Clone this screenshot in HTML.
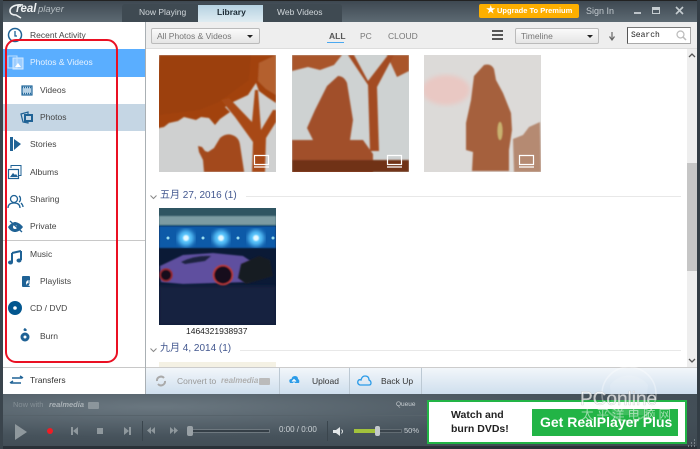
<!DOCTYPE html>
<html><head><meta charset="utf-8"><style>
html,body{margin:0;padding:0;width:700px;height:449px;overflow:hidden;background:#333;}
*{box-sizing:border-box}
body{font-family:"Liberation Sans","Noto Sans CJK SC",sans-serif;position:relative}
#w{position:absolute;left:0;top:0;width:700px;height:449px;overflow:hidden;filter:blur(.35px)}
.a{position:absolute}
.t{position:absolute;white-space:nowrap;line-height:1;color:#444;font-size:8.5px}
svg{position:absolute;overflow:visible}
</style></head><body><div id="w">
<div class="a" style="left:0;top:0;width:700px;height:22px;background:linear-gradient(#3d4750,#5d6a73)"></div>
<div class="a" style="left:0;top:0;width:700px;height:1px;background:#222"></div>
<div class="a" style="left:0;top:0;width:3px;height:449px;background:#3a444c"></div>
<div class="a" style="left:697px;top:0;width:3px;height:449px;background:#333d45"></div>
<!-- logo -->
<div class="t" style="left:16px;top:4px;font-size:11.5px;font-weight:bold;font-style:italic;color:#eef1f2">real</div>
<div class="t" style="left:38px;top:5px;font-size:9.5px;font-style:italic;color:#b5bdc2">player</div>
<svg style="left:9px;top:3px" width="20" height="16"><path d="M14 2C6 1 1 4 1 8c0 3 3 4 6 4l5 3" fill="none" stroke="#eef1f2" stroke-width="1.600"/></svg>
<!-- tabs -->
<div class="a" style="left:122px;top:4px;width:220px;height:18px;background:#3f4a52;border-radius:3px 3px 0 0"></div>
<div class="a" style="left:198px;top:5px;width:65px;height:17px;background:linear-gradient(#b5d2e2,#dfecf2)"></div>
<div class="t" style="left:139px;top:8px;color:#d0d6da">Now Playing</div>
<div class="t" style="left:217px;top:8px;color:#1c2a34;font-weight:bold">Library</div>
<div class="t" style="left:277px;top:8px;color:#d0d6da">Web Videos</div>
<!-- upgrade -->
<div class="a" style="left:479px;top:4px;width:100px;height:14px;background:#fdaf00;border-radius:2px"></div>
<div class="t" style="left:486px;top:6px;color:#fff;font-size:9.5px">★</div>
<div class="t" style="left:497px;top:7px;color:#fff;font-size:7.500px;font-weight:bold">Upgrade To Premium</div>
<div class="t" style="left:586px;top:7px;color:#c3cacf;font-size:9px">Sign In</div>
<div class="a" style="left:634px;top:12px;width:7px;height:2px;background:#bcc3c8"></div>
<div class="a" style="left:652px;top:7px;width:8px;height:7px;border:1px solid #c5ccd0;border-top-width:3px"></div>
<svg style="left:675px;top:6px" width="10" height="10"><path d="M1 1L8 8M8 1L1 8" stroke="#c5ccd0" stroke-width="1.600"/></svg>
<!-- sidebar -->
<div class="a" style="left:3px;top:22px;width:143px;height:372px;background:#fff;border-right:1px solid #aab0b4"></div>
<div class="a" style="left:3px;top:49px;width:142px;height:28px;background:#5aaeff"></div>
<div class="a" style="left:3px;top:104px;width:142px;height:27px;background:#c5d6e4"></div>
<div class="a" style="left:3px;top:240px;width:142px;height:1px;background:#c8c8c8"></div>
<div class="a" style="left:3px;top:367px;width:142px;height:1px;background:#c8c8c8"></div>
<div class="t" style="left:30px;top:31px">Recent Activity</div>
<div class="t" style="left:30px;top:58px;color:#e6f2ff">Photos &amp; Videos</div>
<div class="t" style="left:40px;top:86px">Videos</div>
<div class="t" style="left:40px;top:113px">Photos</div>
<div class="t" style="left:30px;top:140px">Stories</div>
<div class="t" style="left:30px;top:168px">Albums</div>
<div class="t" style="left:30px;top:195px">Sharing</div>
<div class="t" style="left:30px;top:222px">Private</div>
<div class="t" style="left:30px;top:250px">Music</div>
<div class="t" style="left:40px;top:277px">Playlists</div>
<div class="t" style="left:30px;top:304px">CD / DVD</div>
<div class="t" style="left:40px;top:332px">Burn</div>
<div class="t" style="left:30px;top:376px;color:#333">Transfers</div>
<!-- sidebar icons -->
<svg style="left:0;top:0" width="150" height="394">
<circle cx="15" cy="35" r="6.500" fill="none" stroke="#1f6295" stroke-width="1.500"/><path d="M15 31v5h2" fill="none" stroke="#1f6295" stroke-width="1.300"/>
<rect x="13" y="58" width="10" height="11" fill="#9ccdff" stroke="#d5eaff"/><rect x="8" y="56" width="9" height="12" fill="none" stroke="#bfe0ff"/><path d="M15 67l3-4 3 4z" fill="#fff"/>
<rect x="22" y="86" width="10" height="9" fill="#b9d3e6" stroke="#23689b" stroke-width="1.200"/><path d="M22 87.500h10M22 93.500h10" stroke="#23689b" stroke-width="1.500" stroke-dasharray="1 1"/>
<rect x="24" y="114" width="9" height="8" fill="#1f6295"/><path d="M21 114l7-2v11l-5-1z" fill="none" stroke="#1f6295" stroke-width="1.200"/><rect x="26" y="116" width="5" height="4" fill="#c5d6e4"/>
<path d="M10 137h3v14h-3zM14 139l7 5-7 6z" fill="#1f6295"/>
<rect x="8.500" y="169.500" width="10" height="9" fill="#fff" stroke="#1f6295" stroke-width="1.200"/><path d="M11 168v-2.500h10v10h-2" fill="none" stroke="#1f6295"/><path d="M10 177l3-4 2 2 1-1 2 3z" fill="#1f6295"/>
<circle cx="14" cy="199" r="3.500" fill="none" stroke="#1f6295" stroke-width="1.300"/><path d="M8 208c0-4 3-5 6-5s6 1 6 5M19 196c2 1 2 5 0 6M21 203c1 1 2 2 2 4" fill="none" stroke="#1f6295" stroke-width="1.300"/>
<path d="M8 227c3-4 6-5 7-5s5 1 8 5c-3 4-6 5-8 5s-5-1-7-5z" fill="#1f6295"/><circle cx="15" cy="227" r="2" fill="#fff"/><path d="M10 221l12 11" stroke="#1f6295" stroke-width="1.300"/>
<path d="M12 253v9M21 251v9M12 253l9-2" fill="none" stroke="#1f6295" stroke-width="2"/><ellipse cx="10.500" cy="262.500" rx="2.500" ry="2" fill="#1f6295"/><ellipse cx="19" cy="260.500" rx="2.500" ry="2" fill="#1f6295"/>
<rect x="22" y="276" width="8" height="11" rx="1" fill="#1f6295"/><circle cx="29" cy="283" r="3" fill="#fff"/><path d="M29 279v5" stroke="#1f6295"/><circle cx="28" cy="284.500" r="1.200" fill="#1f6295"/>
<circle cx="15" cy="308" r="7" fill="#03578f"/><circle cx="15" cy="308" r="1.800" fill="#fff"/>
<circle cx="25" cy="337" r="4.500" fill="#1f6295"/><circle cx="25" cy="337" r="1.500" fill="#fff"/><path d="M25 331c-2 0-2-2 0-3 1 1 3 2 1 3z" fill="#1f6295"/>
<path d="M12 378h10M20 376l3 2M11 383h10M13 381l-3 2" fill="none" stroke="#1f6295" stroke-width="1.500"/>
</svg>
<!-- toolbar -->
<div class="a" style="left:146px;top:22px;width:551px;height:27px;background:#eee;border-bottom:1px solid #ddd"></div>
<div class="a" style="left:151px;top:28px;width:109px;height:16px;background:linear-gradient(#fafafa,#e5e5e5);border:1px solid #bbb;border-radius:2px"></div>
<div class="t" style="left:157px;top:32px;color:#777">All Photos &amp; Videos</div>
<div class="a" style="left:247px;top:35px;border:3px solid transparent;border-top:3px solid #222"></div>
<div class="t" style="left:329px;top:32px;font-weight:bold;color:#555">ALL</div>
<div class="a" style="left:327px;top:42px;width:17px;height:1px;background:#4aa8f0"></div>
<div class="t" style="left:360px;top:32px;color:#777">PC</div>
<div class="t" style="left:388px;top:32px;color:#777">CLOUD</div>
<div class="a" style="left:492px;top:30px;width:11px;height:2px;background:#555"></div>
<div class="a" style="left:492px;top:34px;width:11px;height:2px;background:#555"></div>
<div class="a" style="left:492px;top:38px;width:11px;height:2px;background:#555"></div>
<div class="a" style="left:515px;top:28px;width:84px;height:16px;background:linear-gradient(#fafafa,#e5e5e5);border:1px solid #bbb;border-radius:2px"></div>
<div class="t" style="left:521px;top:32px;color:#777">Timeline</div>
<div class="a" style="left:587px;top:35px;border:3px solid transparent;border-top:3px solid #222"></div>
<svg style="left:608px;top:32px" width="8" height="9"><path d="M4 0v7M1.500 4.500L4 8l2.500-3.500" fill="none" stroke="#666" stroke-width="1.200"/></svg>
<div class="a" style="left:627px;top:27px;width:64px;height:17px;background:#fff;border:1px solid #aaa;border-top-color:#777;border-left-color:#555"></div>
<div class="t" style="left:631px;top:32px;color:#222;font-family:'Liberation Mono',monospace;font-size:8px">Search</div>
<svg style="left:676px;top:30px" width="11" height="11"><circle cx="4.500" cy="4.500" r="3.500" fill="none" stroke="#bbb" stroke-width="1.200"/><path d="M7 7l3 3" stroke="#bbb" stroke-width="1.500"/></svg>
<!-- content -->
<div class="a" style="left:146px;top:49px;width:541px;height:318px;background:#fff"></div>
<div class="a" style="left:687px;top:49px;width:10px;height:318px;background:#eee"></div>
<div class="a" style="left:687px;top:163px;width:10px;height:108px;background:#c6c6c6"></div>
<svg style="left:688px;top:53px" width="8" height="6"><path d="M1 4l3-3 3 3" fill="none" stroke="#555" stroke-width="1.300"/></svg>
<svg style="left:688px;top:358px" width="8" height="6"><path d="M1 1l3 3 3-3" fill="none" stroke="#555" stroke-width="1.300"/></svg>
<!-- photo 1 -->
<svg style="left:159px;top:55px;overflow:hidden" width="117" height="117">
<defs><filter id="b"><feGaussianBlur stdDeviation=".9"/></filter><filter id="c"><feGaussianBlur stdDeviation="2.500"/></filter><filter id="e"><feGaussianBlur stdDeviation="1.500"/></filter></defs>
<rect width="117" height="117" fill="#cfd0d0"/>
<g filter="url(#b)">
<path d="M0 0h117v48l-9-6-8-6-3-8-8 12-15 7-8 5 5 5-10 7-5 6-6-7-8-1-5 3-12-3-6 4-9 2-5 4-5 1-4 1z" fill="#a2430e"/>
<path d="M0 0h92l-2 25-30 22-20 8-40 5z" fill="#9c3f0d"/>
<path d="M100 8l17-8v40l-10-6-8-8z" fill="#b4602e"/>
<path d="M62 45l8-2 23 24 3-32h3l3 40 12-20h3v12l-10 16-1 34H93l1-30-18-25z" fill="#a84a12"/>
<path d="M45 117l-1-12-4-8-1-6 4 1 3 4 3 1 6-4 6-10q6-5 12-3 7 2 8 10l4 26 0 1z" fill="#a3491a"/>
</g>
</svg>
<!-- photo 2 -->
<svg style="left:292px;top:55px;overflow:hidden" width="117" height="117">
<rect width="117" height="117" fill="#ced2d2"/>
<g filter="url(#b)">
<path d="M0 0h50l-8 10-14 5-12-3-16 4z" fill="#a9552a"/>
<path d="M105 22l12-6V0H95z" fill="#a9552a"/>
<path d="M56 0h6l14 26 20-26h6l-17 32 2 64h-9l-2-66z" fill="#a34c20"/>
<path d="M0 85h21l-6-12 8-18 12-24 11-10q6 0 9 7l6 37-3 20h13l10 14v20H0z" fill="#a1502a"/>
<path d="M0 105l117 0v12H0z" fill="#6f3218"/>
</g>
</svg>
<!-- photo 3 -->
<svg style="left:424px;top:55px;overflow:hidden" width="117" height="117">
<rect width="117" height="117" fill="#dcdad8"/>
<ellipse cx="22" cy="35" rx="24" ry="15" fill="#e9c8c3" filter="url(#c)"/>
<g filter="url(#b)">
<path d="M60 10q7-2 10 4l2 11 7 13 8 20 1 17-3 20v21H48l1-19-7-2V68l5-23 3-24z" fill="#a5613c"/>
<path d="M89 84l10-4 6-8 11-5 1 50H90z" fill="#b58a72"/>
<ellipse cx="76" cy="76" rx="2.500" ry="9" fill="#c9b270"/>
</g>
</svg>
<!-- photo icons -->
<svg style="left:0;top:0" width="700" height="449" fill="none" stroke="#fff">
<path d="M254.500 155.500h14v9h-14zM254 167h15M387.500 155.500h14v9h-14zM387 167h15M519.500 155.500h14v9h-14zM519 167h15M254.500 309.500h14v9h-14zM254 321h15" stroke-width="1.200"/>
</svg>
<!-- date 1 -->
<svg style="left:150px;top:195px" width="7" height="5"><path d="M.5.500l3 3 3-3" fill="none" stroke="#888"/></svg>
<div class="t" style="left:160px;top:191px;color:#42578f;font-size:10px">五月 27, 2016 (1)</div>
<div class="a" style="left:246px;top:196px;width:435px;height:1px;background:#e8e8e8"></div>
<!-- car -->
<svg style="left:159px;top:208px;overflow:hidden" width="117" height="117">
<rect width="117" height="117" fill="#0b1a36"/>
<rect width="117" height="18" fill="#2f5562"/>
<rect y="8" width="117" height="9" fill="#7c9ba2" filter="url(#b)"/>
<rect y="18" width="117" height="22" fill="#0b5aa8" filter="url(#b)"/>
<circle cx="27" cy="30" r="8" fill="#5cc8ff" filter="url(#c)"/><circle cx="62" cy="30" r="8" fill="#5cc8ff" filter="url(#c)"/><circle cx="97" cy="30" r="8" fill="#5cc8ff" filter="url(#c)"/>
<circle cx="27" cy="30" r="3" fill="#e6f9ff" filter="url(#b)"/><circle cx="62" cy="30" r="3" fill="#e6f9ff" filter="url(#b)"/><circle cx="97" cy="30" r="3" fill="#e6f9ff" filter="url(#b)"/>
<circle cx="9" cy="30" r="1.500" fill="#9de"/><circle cx="44" cy="30" r="1.500" fill="#9de"/><circle cx="79" cy="30" r="1.500" fill="#9de"/><circle cx="114" cy="30" r="1.500" fill="#9de"/>
<rect y="78" width="117" height="39" fill="#14203f" filter="url(#e)"/>
<path d="M1 58l23-11 30-2 30 3 12 8-6 18-66 2-22-2z" fill="#5f4f9f" filter="url(#b)"/>
<path d="M22 54q14-7 30-6l-6 5-20 3z" fill="#1d2440" filter="url(#b)"/>
<path d="M82 56l18-8 11 4 3 16-27 8-8-6z" fill="#191a22" filter="url(#b)"/>
<circle cx="64" cy="67" r="9.500" fill="#15101a" stroke="#c23a3a" stroke-width="1.500" filter="url(#b)"/>
<circle cx="7" cy="67" r="6" fill="#15101a" stroke="#a02a30" stroke-width="1.500" filter="url(#b)"/>
</svg>
<div class="t" style="left:186px;top:327px;color:#222">1464321938937</div>
<!-- date 2 -->
<svg style="left:150px;top:348px" width="7" height="5"><path d="M.5.500l3 3 3-3" fill="none" stroke="#888"/></svg>
<div class="t" style="left:160px;top:344px;font-size:10px;color:#42578f">九月 4, 2014 (1)</div>
<div class="a" style="left:240px;top:350px;width:441px;height:1px;background:#e8e8e8"></div>
<div class="a" style="left:159px;top:362px;width:117px;height:5px;background:#f4f1e4"></div>
<!-- action bar -->
<div class="a" style="left:146px;top:367px;width:551px;height:27px;background:linear-gradient(#f2f6fa,#cfdfee);border-top:1px solid #ccc"></div>
<div class="a" style="left:279px;top:368px;width:1px;height:26px;background:#bcc9d4"></div>
<div class="a" style="left:349px;top:368px;width:1px;height:26px;background:#bcc9d4"></div>
<div class="a" style="left:421px;top:368px;width:1px;height:26px;background:#bcc9d4"></div>
<svg style="left:155px;top:375px" width="12" height="12"><path d="M2 6a4 4 0 0 1 7-3M10 6a4 4 0 0 1-7 3" fill="none" stroke="#aaa" stroke-width="2"/></svg>
<div class="t" style="left:177px;top:377px;color:#999">Convert to</div>
<div class="t" style="left:221px;top:377px;color:#b0b0b0;font-size:8px;font-weight:bold;font-style:italic">realmedia</div>
<div class="a" style="left:259px;top:378px;width:11px;height:7px;background:#bbb;border-radius:1px"></div>
<svg style="left:288px;top:375px" width="12" height="10"><path d="M2 8Q0 4 3.500 4 4 1 7 1t3 3q2 1 1 4z" fill="#2b9be8"/><path d="M6 9V5M4 6.500L6 4.500l2 2" stroke="#fff" fill="none"/></svg>
<div class="t" style="left:312px;top:377px;color:#333">Upload</div>
<svg style="left:357px;top:375px" width="15" height="11"><path d="M3 10Q0 9 1 6 2 4 4 5 5 1 8 1q4 0 4 4 2 1 2 3t-2 2z" fill="none" stroke="#2b9be8" stroke-width="1.300"/></svg>
<div class="t" style="left:381px;top:377px;color:#333">Back Up</div>
<!-- player -->
<div class="a" style="left:3px;top:394px;width:694px;height:52px;background:radial-gradient(ellipse at 22% 25%,#6a7780,#46525b 55%,#3d4850)"></div>
<div class="a" style="left:3px;top:446px;width:694px;height:3px;background:#2a3138"></div>
<div class="a" style="left:3px;top:415px;width:424px;height:1px;background:#57636b"></div>
<div class="t" style="left:13px;top:401px;color:#858f96;font-size:7.500px">Now with</div>
<div class="t" style="left:49px;top:401px;color:#aab2b7;font-size:7.500px;font-weight:bold;font-style:italic">realmedia</div>
<div class="a" style="left:88px;top:402px;width:11px;height:7px;background:#8c969c;border-radius:1px"></div>
<div class="t" style="left:396px;top:402px;color:#c8ced2;font-size:6.500px">Queue</div>
<svg style="left:0;top:0" width="430" height="449">
<path d="M15 424l12 8-12 8z" fill="#8f989d"/>
<circle cx="50" cy="431" r="3" fill="#f01c24"/>
<path d="M71 427h2v8h-2zM78 427v8l-5-4z" fill="#8f989d"/>
<rect x="97" y="428" width="6" height="6" fill="#8f989d"/>
<path d="M124 427l5 4-5 4zM129 427h2v8h-2z" fill="#8f989d"/>
<path d="M155 427v7l-4-3.500zM151 427v7l-4-3.500zM170 427v7l4-3.500zM174 427v7l4-3.500z" fill="#8f989d"/>
<rect x="142" y="421" width="1" height="20" fill="#3a454d"/>
</svg>
<div class="a" style="left:189px;top:429px;width:81px;height:4px;background:#353f47;border:1px solid #6e787f"></div>
<div class="a" style="left:187px;top:426px;width:6px;height:10px;background:#99a1a6;border-radius:2px"></div>
<div class="t" style="left:279px;top:426px;color:#ccd2d6;font-size:8px">0:00 / 0:00</div>
<div class="a" style="left:327px;top:421px;width:1px;height:20px;background:#3a454d"></div>
<svg style="left:333px;top:426px" width="12" height="11"><path d="M0 4h3l4-3v9l-4-3H0z" fill="#e2e6e8"/><path d="M8.500 3.500q2 2 0 4" stroke="#e2e6e8" fill="none"/></svg>
<div class="a" style="left:354px;top:429px;width:24px;height:4px;background:#a2c23c"></div>
<div class="a" style="left:378px;top:429px;width:24px;height:4px;background:#3a444c;border:1px solid #626c73"></div>
<div class="a" style="left:375px;top:426px;width:5px;height:10px;background:#c4c9cc;border-radius:2px"></div>
<div class="t" style="left:404px;top:427px;color:#c8ced2;font-size:7.500px">50%</div>
<!-- ad -->
<div class="a" style="left:427px;top:400px;width:260px;height:44px;background:#fff;border:2px solid #22b446"></div>
<div class="t" style="left:451px;top:410px;color:#222;font-size:10.500px;font-weight:bold">Watch and</div>
<div class="t" style="left:451px;top:424px;color:#222;font-size:10.500px;font-weight:bold">burn DVDs!</div>
<div class="a" style="left:532px;top:409px;width:146px;height:27px;background:#22b446"></div>
<div class="t" style="left:540px;top:415px;color:#fff;font-size:14px;font-weight:bold">Get RealPlayer Plus</div>
<!-- watermark -->
<svg style="left:0;top:0" width="700" height="449" opacity=".5">
<circle cx="629" cy="394" r="27" fill="none" stroke="#fff" stroke-width="1.500" opacity=".7"/>
<path d="M610 385a24 24 0 0 1 38 0l-3 30h-33z" fill="#fff" opacity=".25"/>
</svg>
<div class="t" style="left:580px;top:390px;color:rgba(255,255,255,.7);font-size:19px;-webkit-text-stroke:.3px #bbb">PConline</div>
<div class="t" style="left:656px;top:402px;color:rgba(255,255,255,.6);font-size:6px">.com.cn</div>
<div class="t" style="left:581px;top:409px;color:rgba(255,255,255,.55);font-size:12.500px;letter-spacing:3px">太平洋电脑网</div>
<svg style="left:686px;top:438px" width="11" height="10"><path d="M2 8h1M5 8h1M8 8h1M5 5h1M8 5h1M8 2h1" stroke="#8a949a" stroke-width="1.500"/></svg>
<!-- red annotation -->
<div class="a" style="left:5px;top:39px;width:113px;height:324px;border:2.500px solid #ea1023;border-radius:11px"></div>
</div></body></html>
